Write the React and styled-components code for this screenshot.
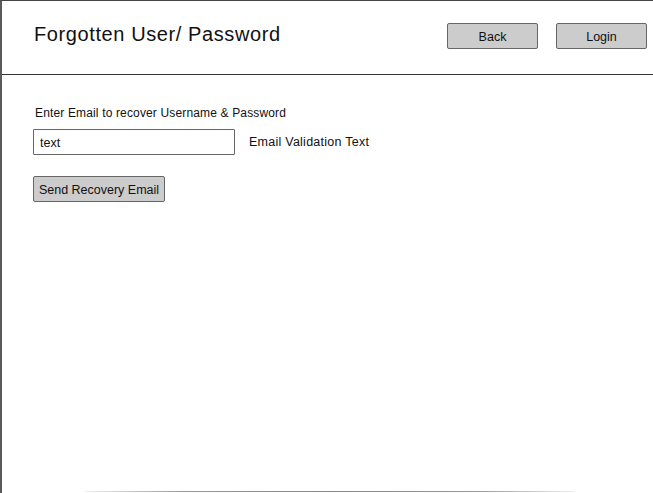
import React from 'react';
import styled, { createGlobalStyle } from 'styled-components';

const GlobalStyle = createGlobalStyle`
  html, body {
    margin: 0;
    padding: 0;
    background: #fff;
  }
  body {
    font-family: "Liberation Sans", Arial, sans-serif;
    color: #111;
  }
`;

const Frame = styled.div`
  box-sizing: border-box;
  width: 653px;
  height: 493px;
  border-left: 2px solid #5a5a5a;
  border-top: 1px solid #444;
  display: flex;
  flex-direction: column;
`;

const Header = styled.header`
  box-sizing: border-box;
  height: 74px;
  border-bottom: 1px solid #333;
  display: flex;
  align-items: flex-start;
  padding: 21px 6px 0 32px;
`;

const Title = styled.h1`
  margin: 1px 0 0;
  flex: 1;
  font-size: 20px;
  font-weight: normal;
  letter-spacing: 0.6px;
`;

const Actions = styled.div`
  display: flex;
  gap: 18px;
  padding-top: 1px;
`;

const Button = styled.button`
  box-sizing: border-box;
  width: ${(p) => p.$width || 91}px;
  height: 26px;
  background: #cccccc;
  border: 1.5px solid #666;
  border-radius: 2px;
  font-family: "Liberation Sans", Arial, sans-serif;
  font-size: 12.5px;
  color: #111;
  padding: 2px 0 0;
  cursor: pointer;
`;

const Content = styled.main`
  flex: 1;
  padding: 31px 0 0 31px;
  display: flex;
  flex-direction: column;
`;

const Label = styled.div`
  font-size: 12px;
  letter-spacing: 0.15px;
  margin-left: 2px;
  margin-bottom: 9px;
`;

const Row = styled.div`
  display: flex;
  align-items: center;
  gap: 14px;
`;

const TextInput = styled.input`
  box-sizing: border-box;
  width: 202px;
  height: 26px;
  border: 1.5px solid #666;
  border-radius: 1px;
  padding: 1px 6px 0;
  font-family: "Liberation Sans", Arial, sans-serif;
  font-size: 12.5px;
  color: #111;
  outline: none;
`;

const Hint = styled.span`
  font-size: 12.5px;
  letter-spacing: 0.25px;
  margin-top: -1px;
`;

const SendRow = styled.div`
  margin-top: 21px;
`;

const BottomLine = styled.div`
  height: 1px;
  margin: 0 78px 1px 83px;
  background: linear-gradient(90deg, #eee, #999 20%, #888 50%, #999 80%, #eee);
`;

export default function App() {
  return (
    <>
      <GlobalStyle />
      <Frame>
        <Header>
          <Title>Forgotten User/ Password</Title>
          <Actions>
            <Button type="button">Back</Button>
            <Button type="button">Login</Button>
          </Actions>
        </Header>
        <Content>
          <Label>Enter Email to recover Username &amp; Password</Label>
          <Row>
            <TextInput defaultValue="text" />
            <Hint>Email Validation Text</Hint>
          </Row>
          <SendRow>
            <Button type="button" $width={132}>Send Recovery Email</Button>
          </SendRow>
        </Content>
        <BottomLine />
      </Frame>
    </>
  );
}
